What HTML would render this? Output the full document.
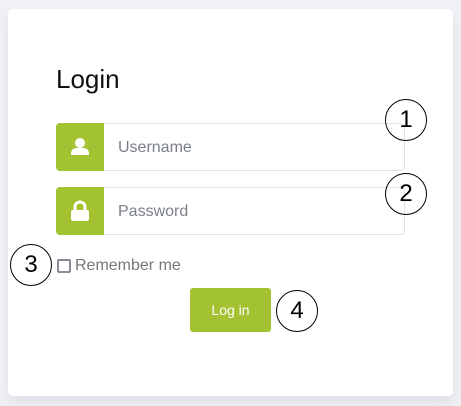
<!DOCTYPE html>
<html><head><style>
body{margin:0;width:461px;height:406px;background:#f0f1f6;font-family:"Liberation Sans",sans-serif;position:relative;overflow:hidden}
.card{position:absolute;left:8px;top:9px;width:445px;height:387px;background:#fff;border-radius:5px;box-shadow:0 6px 12px rgba(0,0,0,0.08)}
.abs{position:absolute}
h1{position:absolute;left:56px;top:64px;margin:0;font-size:26px;font-weight:normal;color:#111}
.inp{position:absolute;left:56px;width:347px;height:46px;border:1px solid #e2e2e2;border-radius:4px;background:#fff}
.ic{position:absolute;left:-1px;top:-1px;width:48px;height:48px;background:#a2c232;border-radius:4px 0 0 4px}
.ph{position:absolute;left:61px;top:15px;font-size:16px;color:#7a7f87}
.circ{position:absolute;width:40px;height:40px;border:1.5px solid #000;border-radius:50%;background:transparent;text-align:center;line-height:40px;font-size:24px;color:#000}
</style></head><body>
<div class="card"></div>
<h1>Login</h1>
<div class="inp" style="top:123px"><div class="ic"><svg width="48" height="48"><circle cx="24" cy="20" r="5" fill="#fff"/><path d="M15 31 Q15 25 21 25 H27 Q33 25 33 31 V32 H15Z" fill="#fff"/></svg></div><div class="ph">Username</div></div>
<div class="inp" style="top:187px"><div class="ic"><svg width="48" height="48"><path d="M19 23 V20 A5 5 0 0 1 29 20 V23" stroke="#fff" stroke-width="3" fill="none"/><rect x="15" y="23" width="18" height="11" rx="2" fill="#fff"/></svg></div><div class="ph">Password</div></div>
<div class="abs" style="left:57px;top:259px;width:10px;height:10px;border:2px solid #8a8a94;border-radius:2px"></div>
<div class="abs" style="left:75px;top:257px;font-size:16px;color:#777">Remember me</div>
<div class="abs" style="left:190px;top:288px;width:81px;height:44px;background:#a2c232;border-radius:3px;color:#fff;font-size:14px;text-align:center;line-height:44px">Log in</div>
<div class="circ" style="left:385px;top:99px">1</div>
<div class="circ" style="left:385px;top:173px">2</div>
<div class="circ" style="left:10px;top:244px">3</div>
<div class="circ" style="left:276px;top:290px">4</div>
</body></html>
